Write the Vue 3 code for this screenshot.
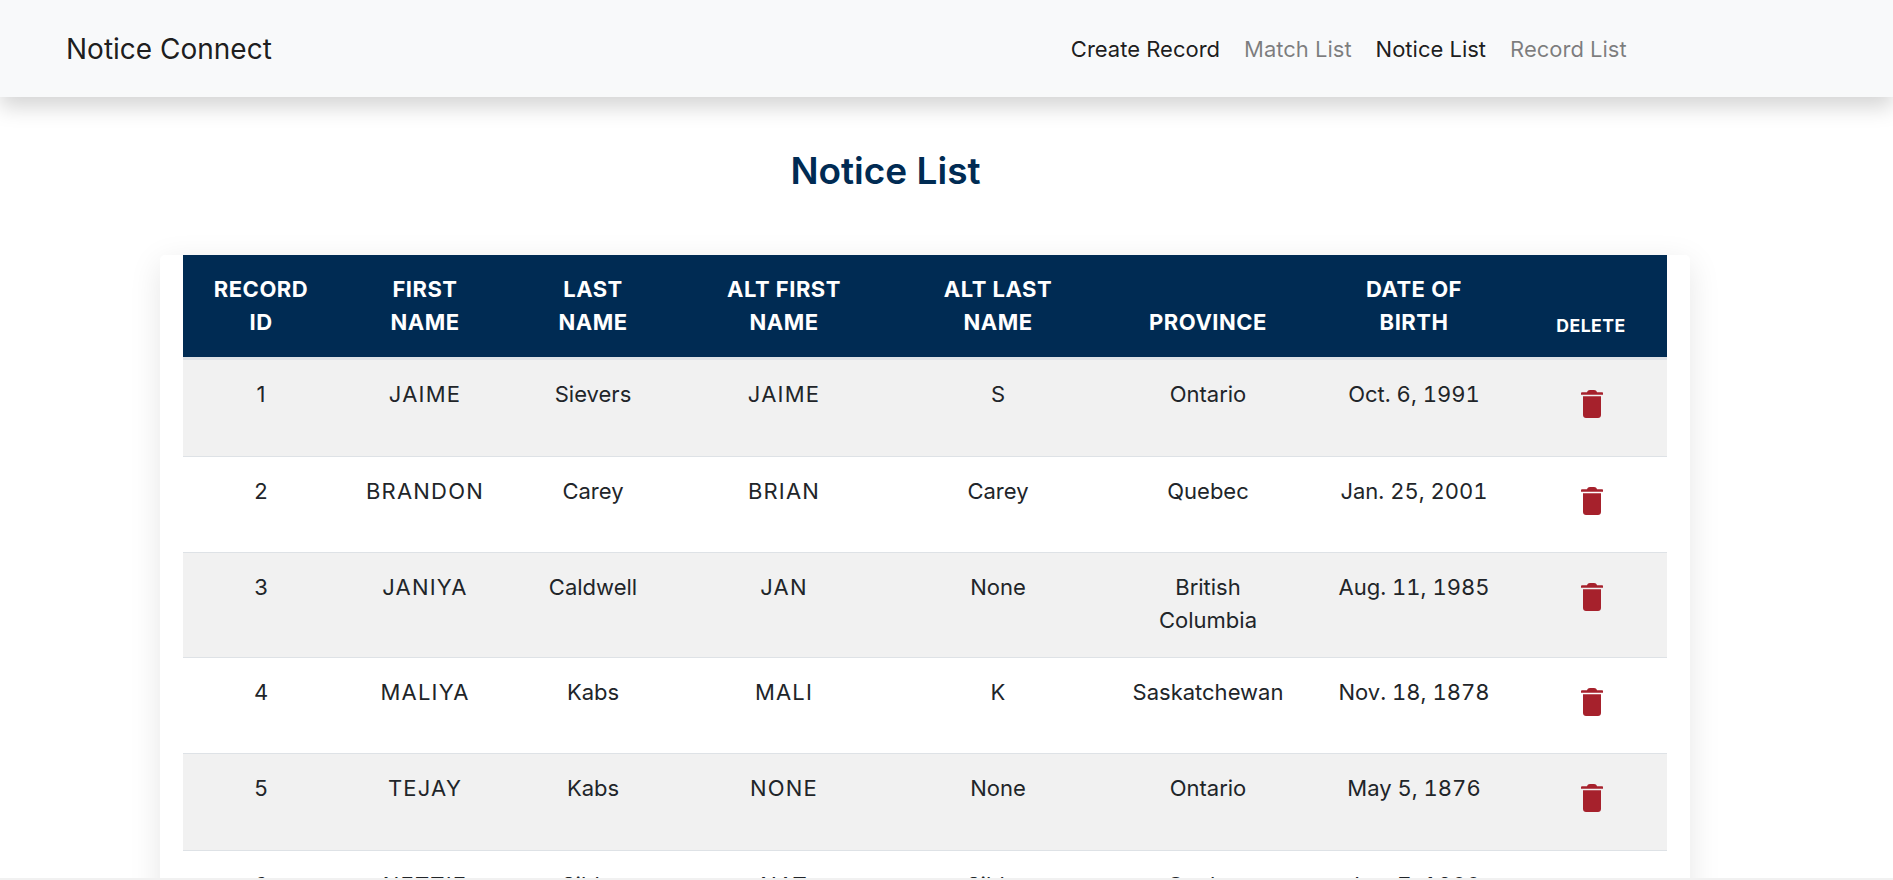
<script setup>
const rows = [
  { id: 1, first: 'JAIME', last: 'Sievers', altFirst: 'JAIME', altLast: 'S', province: 'Ontario', dob: 'Oct. 6, 1991' },
  { id: 2, first: 'BRANDON', last: 'Carey', altFirst: 'BRIAN', altLast: 'Carey', province: 'Quebec', dob: 'Jan. 25, 2001' },
  { id: 3, first: 'JANIYA', last: 'Caldwell', altFirst: 'JAN', altLast: 'None', province: 'British Columbia', dob: 'Aug. 11, 1985' },
  { id: 4, first: 'MALIYA', last: 'Kabs', altFirst: 'MALI', altLast: 'K', province: 'Saskatchewan', dob: 'Nov. 18, 1878' },
  { id: 5, first: 'TEJAY', last: 'Kabs', altFirst: 'NONE', altLast: 'None', province: 'Ontario', dob: 'May 5, 1876' },
  { id: 6, first: 'NETTIE', last: 'Sibley', altFirst: 'NAT', altLast: 'Sibley', province: 'Quebec', dob: 'Jan. 7, 1900' }
]
const cols = [156, 172, 164, 218, 210, 210, 202, 152]
</script>

<template>
  <div class="page">
    <nav class="navbar">
      <a class="brand">Notice Connect</a>
      <ul class="links">
        <li class="dark">Create Record</li>
        <li>Match List</li>
        <li class="dark">Notice List</li>
        <li>Record List</li>
      </ul>
    </nav>
    <h1 class="title">Notice List</h1>
    <div class="card">
      <table>
        <colgroup>
          <col v-for="(c, i) in cols" :key="i" :style="{ width: c + 'px' }" />
        </colgroup>
        <thead>
          <tr>
            <th>RECORD<br />ID</th>
            <th>FIRST<br />NAME</th>
            <th>LAST<br />NAME</th>
            <th>ALT FIRST<br />NAME</th>
            <th>ALT LAST<br />NAME</th>
            <th>PROVINCE</th>
            <th>DATE OF<br />BIRTH</th>
            <th class="small">DELETE</th>
          </tr>
        </thead>
        <tbody>
          <tr v-for="r in rows" :key="r.id">
            <td>{{ r.id }}</td>
            <td class="caps">{{ r.first }}</td>
            <td>{{ r.last }}</td>
            <td class="caps">{{ r.altFirst }}</td>
            <td>{{ r.altLast }}</td>
            <td>{{ r.province }}</td>
            <td class="date">{{ r.dob }}</td>
            <td class="action">
              <svg class="trash" viewBox="0 0 22 28" width="22" height="28">
                <path d="M6 2.200 C6.500 .8 7.500 0 9 0 H13 C14.500 0 15.500 .8 16 2.200 H21 C21.600 2.200 22 2.600 22 3.100 V4.800 H0 V3.100 C0 2.600 .4 2.200 1 2.200 Z" />
                <path d="M2 6.200 H20 V25 C20 26.700 18.700 28 17 28 H5 C3.300 28 2 26.700 2 25 Z" />
              </svg>
            </td>
          </tr>
        </tbody>
      </table>
    </div>
    <div class="scroll-strip"></div>
  </div>
</template>

<style>
html, body { margin: 0; height: 880px; overflow: hidden; background: #fff; }
</style>

<style scoped>
.page {
  font-family: Inter, "Noto Sans", sans-serif;
  color: #212529;
  height: 880px;
  overflow: hidden;
}
.navbar {
  height: 97px;
  box-sizing: border-box;
  background: #f8f9fa;
  box-shadow: 0 10px 20px rgba(0, 0, 0, .17);
  display: flex;
  align-items: center;
  padding: 0 66px;
  position: relative;
}
.brand { font-size: 28px; color: rgba(0, 0, 0, .9); }
.links {
  list-style: none;
  display: flex;
  gap: 24px;
  margin: 0 0 0 799px;
  padding: 0;
  font-size: 22px;
  color: rgba(0, 0, 0, .5);
}
.links .dark { color: rgba(0, 0, 0, .9); }
.title {
  margin: 47px 0 57px;
  font-size: 37px;
  line-height: 54px;
  font-weight: 600;
  color: #002b53;
  text-align: center;
  padding-right: 122px;
}
.card {
  width: 1530px;
  margin-left: 160px;
  box-sizing: border-box;
  padding: 0 23px;
  background: #fff;
  border-radius: 5px;
  box-shadow: 0 8px 32px rgba(0, 0, 0, .1);
}
table {
  width: 1484px;
  table-layout: fixed;
  border-collapse: separate;
  border-spacing: 0;
  font-size: 22px;
  line-height: 33px;
}
th {
  background: #002b53;
  color: #fff;
  font-weight: 700;
  letter-spacing: .5px;
  padding: 18px 12px;
  vertical-align: bottom;
  text-align: center;
  border-bottom: 3px solid #dee2e6;
}
th.small { font-size: 17.6px; line-height: 26px; }
td {
  box-sizing: border-box;
  height: 96.6px;
  padding: 18px 24px 19.5px;
  text-align: center;
  vertical-align: top;
  border-bottom: 1px solid #dee2e6;
}
td.caps { letter-spacing: 1.2px; }
td.date { font-variant-numeric: tabular-nums; padding-left: 12px; padding-right: 12px; }
tbody tr:nth-child(odd) td { background: #f1f1f1; }
.trash { fill: #a6212c; margin: 12px 0 0 2px; display: inline-block; vertical-align: top; }
.scroll-strip {
  position: fixed;
  left: 0;
  right: 0;
  bottom: 0;
  height: 2px;
  background: #f1f1f1;
}
</style>
